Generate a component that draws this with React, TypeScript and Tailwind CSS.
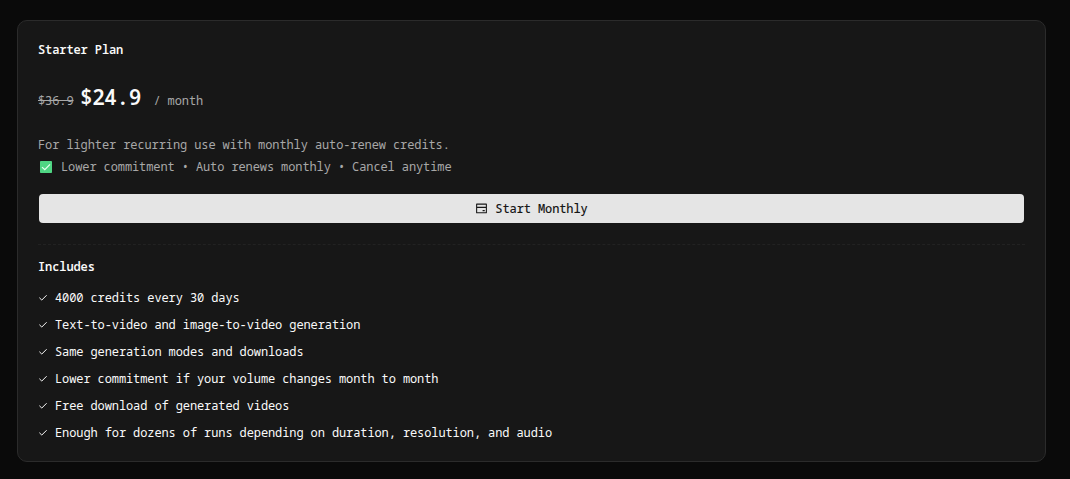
import { Check } from "lucide-react";
import { RiBankCardLine } from "react-icons/ri";

const features = [
  "4000 credits every 30 days",
  "Text-to-video and image-to-video generation",
  "Same generation modes and downloads",
  "Lower commitment if your volume changes month to month",
  "Free download of generated videos",
  "Enough for dozens of runs depending on duration, resolution, and audio",
];

function CheckBadge() {
  return (
    <svg viewBox="0 0 12 12" className="mb-px ml-0.5 size-3 shrink-0" aria-hidden="true">
      <rect width="12" height="12" rx="0.8" fill="#4fd583" />
      <path d="M2 6.1 4.8 8.7 10 3.4" fill="none" stroke="#e9fff1" strokeWidth="1.2" />
    </svg>
  );
}

export default function App() {
  return (
    <main className="h-[479px] w-full bg-[#0a0a0a] pt-5 pl-[17px] font-['Noto_Sans_Mono','DejaVu_Sans_Mono',monospace] text-[12px] tracking-[-0.1px] text-[#fafafa]">
      <section className="flex h-[442px] w-[1029px] flex-col rounded-[10px] border border-[#2b2b2b] bg-[#171717] px-5 pt-[21px]">
        <h3 className="h-4 leading-4 font-[560]">Starter Plan</h3>

        <div className="mt-[23px] flex h-8 items-baseline">
          <span className="leading-8 text-[#a8a8a8] line-through">$36.9</span>
          <span className="ml-[6.5px] text-[21px] leading-8 font-[560] tracking-[-0.43px]">$24.9</span>
          <span className="ml-[12.5px] leading-8 text-[#a8a8a8]">/ month</span>
        </div>

        <div className="mt-[21px] text-[#a8a8a8]">
          <p className="leading-[22px]">For lighter recurring use with monthly auto-renew credits.</p>
          <p className="flex items-center leading-[22px]">
            <CheckBadge />
            <span className="ml-[9px]">Lower commitment • Auto renews monthly • Cancel anytime</span>
          </p>
        </div>

        <button className="mt-4 ml-px flex h-[29px] w-[985px] shrink-0 items-center justify-center gap-[7px] rounded-[4px] bg-[#e5e5e5] font-medium text-[#171717]">
          <RiBankCardLine className="size-[13px]" />
          Start Monthly
        </button>

        <hr className="mt-[21px] border-t border-dashed border-[#222222]" />

        <h4 className="mt-3.5 leading-4 font-[560]">Includes</h4>
        <ul className="mt-[13px] flex flex-col gap-[7px]">
          {features.map((feature) => (
            <li key={feature} className="flex h-5 items-center gap-[7px] leading-5">
              <Check className="mb-px size-2.5 shrink-0" strokeWidth={2.4} />
              {feature}
            </li>
          ))}
        </ul>
      </section>
    </main>
  );
}
